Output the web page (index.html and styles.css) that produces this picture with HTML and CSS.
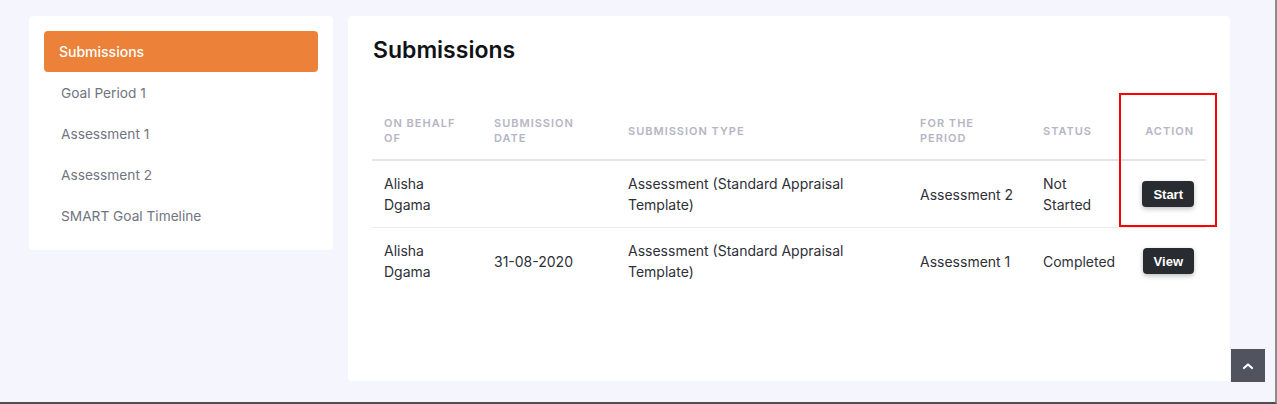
FILE: index.html
```html
<!DOCTYPE html>
<html>
<head>
<meta charset="utf-8">
<link rel="stylesheet" href="styles.css">
</head>
<body>
<div class="page">
  <aside class="side">
    <a class="nav-item active">Submissions</a>
    <a class="nav-item">Goal Period 1</a>
    <a class="nav-item">Assessment 1</a>
    <a class="nav-item">Assessment 2</a>
    <a class="nav-item">SMART Goal Timeline</a>
  </aside>
  <main class="card">
    <h1 class="title">Submissions</h1>
    <table class="tbl">
      <colgroup>
        <col class="c1"><col class="c2"><col class="c3"><col class="c4"><col class="c5"><col class="c6">
      </colgroup>
      <thead>
        <tr>
          <th>On behalf<br>of</th>
          <th>Submission<br>date</th>
          <th>Submission type</th>
          <th>For the<br>period</th>
          <th>Status</th>
          <th class="act">Action</th>
        </tr>
      </thead>
      <tbody>
        <tr>
          <td>Alisha<br>Dgama</td>
          <td></td>
          <td>Assessment (Standard Appraisal<br>Template)</td>
          <td>Assessment 2</td>
          <td>Not<br>Started</td>
          <td class="act"><button class="btn">Start</button></td>
        </tr>
        <tr>
          <td>Alisha<br>Dgama</td>
          <td>31-08-2020</td>
          <td>Assessment (Standard Appraisal<br>Template)</td>
          <td>Assessment 1</td>
          <td>Completed</td>
          <td class="act"><button class="btn">View</button></td>
        </tr>
      </tbody>
    </table>
    <div class="highlight"></div>
  </main>
</div>
<div class="to-top">
  <svg width="12" height="8" viewBox="0 0 12 8"><path d="M2 6 L6 2.5 L10 6" fill="none" stroke="#fff" stroke-width="2.2" stroke-linecap="round" stroke-linejoin="round"/></svg>
</div>
</body>
</html>
```
FILE: styles.css
```css
html, body {
  margin: 0;
  padding: 0;
}
body {
  background: #f4f5fd;
  font-family: Inter, "Noto Sans", sans-serif;
  height: 404px;
  box-sizing: border-box;
  border-right: 2px solid #8d8d90;
  border-bottom: 2px solid #4d4d52;
  overflow: hidden;
}
.page {
  display: flex;
  align-items: flex-start;
  padding: 16px 0 0 29px;
  gap: 15px;
}
.side {
  width: 304px;
  background: #fff;
  border-radius: 4px;
  padding: 15px 15px 14px;
  box-sizing: border-box;
  display: flex;
  flex-direction: column;
}
.nav-item {
  display: block;
  height: 41px;
  line-height: 43px;
  padding-left: 17px;
  font-size: 13.7px;
  color: #71747f;
  border-radius: 4px;
}
.nav-item.active {
  background: #ec8139;
  color: #fff;
  padding-left: 15px;
  font-weight: 500;
  font-size: 14px;
  line-height: 41px;
}
.card {
  position: relative;
  width: 882px;
  height: 365px;
  background: #fff;
  border-radius: 4px;
  padding: 21px 24px 0;
  box-sizing: border-box;
}
.title {
  margin: 0 0 0 1px;
  font-size: 23px;
  line-height: 27px;
  font-weight: 600;
  color: #111218;
}
.tbl {
  margin-top: 38px;
  width: 834px;
  border-collapse: collapse;
  table-layout: fixed;
}
.c1 { width: 110px; }
.c2 { width: 134px; }
.c3 { width: 292px; }
.c4 { width: 123px; }
.c5 { width: 95px; }
.c6 { width: 80px; }
.tbl th {
  text-align: left;
  font-size: 11px;
  line-height: 15px;
  font-weight: 600;
  letter-spacing: 1px;
  text-transform: uppercase;
  color: #b5b5c3;
  padding: 14px 12px 13px;
  border-bottom: 2px solid #e5e5ea;
  vertical-align: middle;
}
.tbl td {
  font-size: 14px;
  line-height: 21px;
  color: #2e3038;
  padding: 12px 12px;
  vertical-align: middle;
  border-bottom: 1px solid #ebebef;
}
.tbl tbody tr:last-child td {
  border-bottom: none;
}
.tbl .act {
  text-align: right;
}
.btn {
  background: #282c31;
  color: #fff;
  border: none;
  border-radius: 4px;
  font-family: "Liberation Sans", Arial, sans-serif;
  font-weight: 700;
  font-size: 13px;
  height: 26px;
  padding: 0 11px;
  box-shadow: 0 2px 5px rgba(0,0,0,0.25);
}
.btn.view {
  margin-right: 1px;
}
.highlight {
  position: absolute;
  left: 771px;
  top: 77px;
  width: 98px;
  height: 134px;
  box-sizing: border-box;
  border: 2px solid #f00;
  pointer-events: none;
}
.to-top {
  position: fixed;
  right: 12px;
  bottom: 22px;
  width: 34px;
  height: 33px;
  background: #51545f;
  display: flex;
  align-items: center;
  justify-content: center;
}
```
